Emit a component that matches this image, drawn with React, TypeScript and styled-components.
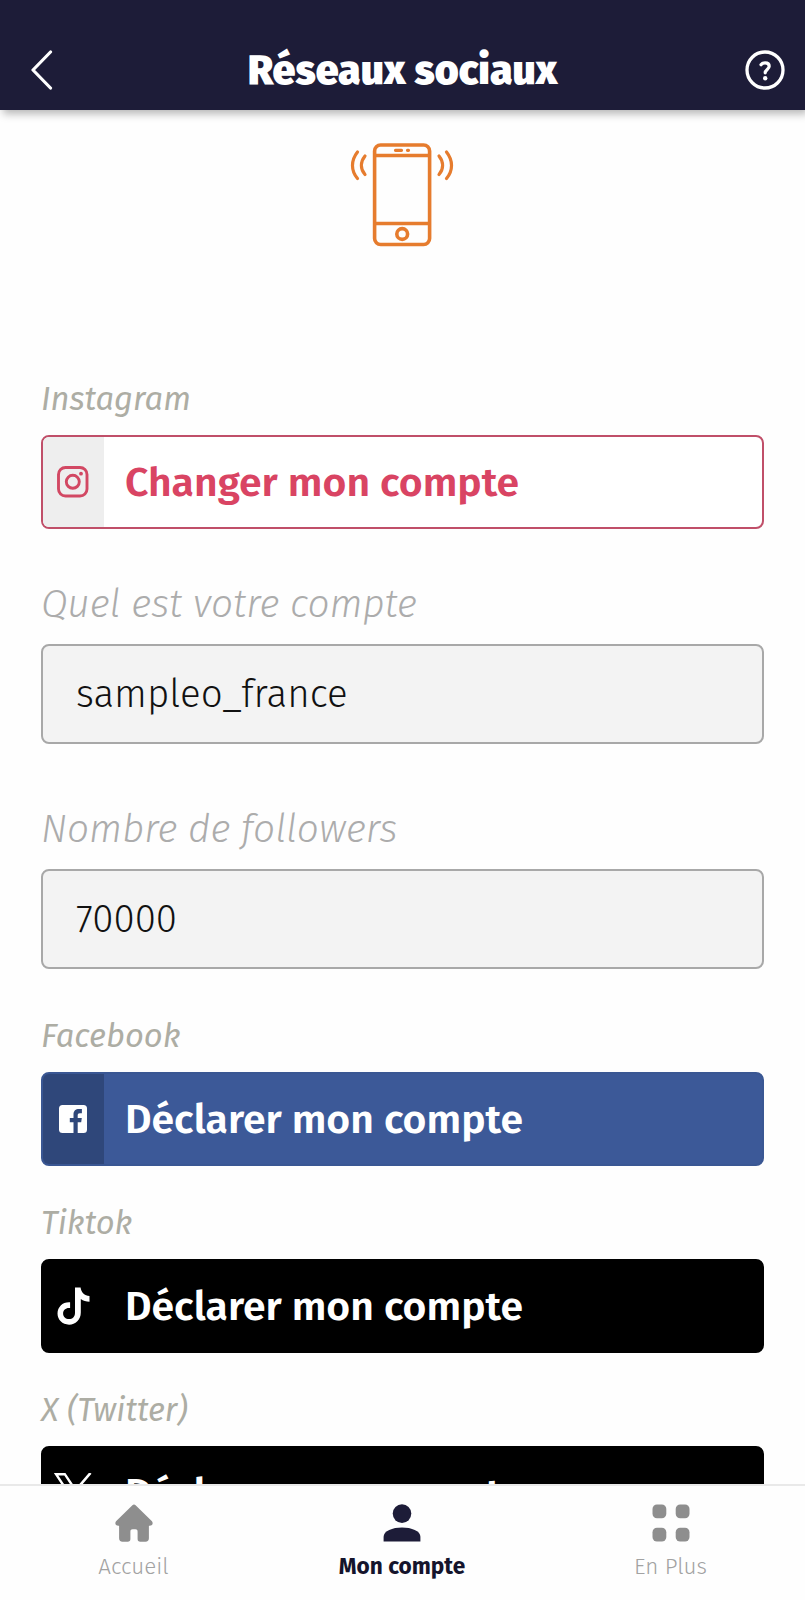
import React from "react";
import styled, { createGlobalStyle } from "styled-components";

const GlobalStyle = createGlobalStyle`
  * { box-sizing: border-box; }
  html, body { margin: 0; background: #fefefe; }
  body { font-family: "Fira Sans", "Noto Sans", sans-serif; }
`;

const Screen = styled.div`
  width: 805px;
  height: 1600px;
  display: flex;
  flex-direction: column;
  overflow: hidden;
  background: #fefefe;
`;

const Header = styled.header`
  flex: none;
  height: 110px;
  padding: 30px 20px 0 30px;
  display: grid;
  grid-template-columns: 50px 1fr 60px;
  align-items: center;
  background: #1d1c38;
  box-shadow: 3px 4px 8px rgba(0, 0, 0, 0.28);
  z-index: 1;
  svg { display: block; }
  svg:last-child { justify-self: end; }
`;

const Title = styled.h1`
  margin: 0;
  padding-top: 2px;
  text-align: center;
  white-space: nowrap;
  font-size: 41px;
  line-height: 50px;
  font-weight: 900;
  color: #fff;
`;

const Main = styled.main`
  flex: 1;
  min-height: 0;
  overflow: hidden;
  padding: 30px 41px 0;
  display: flex;
  flex-direction: column;
`;

const Illustration = styled.div`
  flex: none;
  height: 237px;
  display: flex;
  justify-content: center;
  align-items: flex-start;
`;

const Section = styled.section<{ $after: number }>`
  flex: none;
  margin-bottom: ${(p) => p.$after}px;
`;

const NetworkName = styled.h2`
  margin: 0 0 16px;
  padding-top: 2px;
  font-size: 32.7px;
  line-height: 40px;
  font-weight: 400;
  font-style: italic;
  color: #adada4;
`;

const AccountButton = styled.button<{ $bg: string; $line: string; $ink: string }>`
  width: 100%;
  height: 94px;
  padding: 0;
  display: flex;
  align-items: stretch;
  overflow: hidden;
  border: 2px solid ${(p) => p.$line};
  border-radius: 8px;
  background: ${(p) => p.$bg};
  color: ${(p) => p.$ink};
  font-family: inherit;
`;

const IconCell = styled.span<{ $bg: string }>`
  width: 61px;
  display: flex;
  align-items: center;
  justify-content: center;
  padding-right: 1px;
  background: ${(p) => p.$bg};
`;

const ButtonText = styled.span`
  align-self: center;
  padding: 2px 0 0 21px;
  white-space: nowrap;
  font-size: 40.9px;
  line-height: 54px;
  font-weight: 600;
`;

const FieldLabel = styled.label`
  display: block;
  margin-bottom: 15px;
  padding-top: 2px;
  font-size: 38.8px;
  line-height: 50px;
  font-weight: 300;
  font-style: italic;
  color: #acacac;
`;

const FieldValue = styled.div`
  height: 100px;
  padding: 0 33px;
  border: 2px solid #a8a8a8;
  border-radius: 8px;
  background: #f3f3f3;
  font-size: 38.5px;
  line-height: 96px;
  font-weight: 300;
  color: #111;
`;

const TabBar = styled.nav`
  flex: none;
  height: 116px;
  border-top: 2px solid #e9e9e9;
  background: #fefefe;
  display: grid;
  grid-template-columns: 267px 270px 267px;
`;

const Tab = styled.div<{ $active?: boolean }>`
  display: flex;
  flex-direction: column;
  align-items: center;
  padding-top: 18px;
  color: ${(p) => (p.$active ? "#1d1c38" : "#8e8e8e")};
  svg { display: block; }
`;

const TabText = styled.span<{ $active?: boolean }>`
  margin-top: 10px;
  font-size: ${(p) => (p.$active ? 22.6 : 22.4)}px;
  line-height: 30px;
  font-weight: ${(p) => (p.$active ? 700 : 300)};
  color: ${(p) => (p.$active ? "#15142c" : "#a2a2a2")};
`;

const BackIcon = () => (
  <svg width="24" height="40" viewBox="0 0 24 40" fill="none">
    <path d="M20.500 2 3 20l17.500 18" stroke="#fff" strokeWidth="3.200" strokeLinecap="round" strokeLinejoin="round" />
  </svg>
);

const HelpIcon = () => (
  <svg width="40" height="40" viewBox="0 0 40 40" fill="none" stroke="#fff" strokeLinecap="round">
    <circle cx="20" cy="20" r="18" strokeWidth="3.300" />
    <path d="M16 14.800c1-1.300 2.400-2 4.100-2 2.500 0 4.100 1.400 4.100 3.500 0 3-4 3.300-4 6.500" strokeWidth="3.200" />
    <circle cx="20.200" cy="28.200" r="2.200" fill="#fff" stroke="none" />
  </svg>
);

const PhoneIcon = () => (
  <svg width="105" height="110" viewBox="0 0 105 110" fill="none" stroke="#e67c2e" strokeWidth="3.600" strokeLinecap="round">
    <rect x="24.600" y="5" width="55" height="99.500" rx="6" />
    <path d="M25 15.500h54M25 83.500h54" />
    <path d="M45.500 10.300h6M57.500 10.300h1" strokeWidth="3.200" />
    <circle cx="52.200" cy="94" r="5.400" />
    <path d="M7.500 12C.8 20.500.8 30.500 7.500 38.500M15 16c-4.800 6-4.800 13 0 18.500M96.500 12c6.700 8.500 6.700 18.500 0 26.500M89 16c4.800 6 4.800 13 0 18.500" strokeWidth="3.200" />
  </svg>
);

const InstagramIcon = () => (
  <svg width="32" height="32" viewBox="0 0 32 32" fill="none" stroke="#d24863" strokeWidth="2.900">
    <rect x="1.500" y="1.500" width="28.500" height="28.500" rx="7" />
    <circle cx="15.800" cy="15.800" r="6.500" />
    <circle cx="24" cy="7.700" r="1.900" fill="#d24863" stroke="none" />
  </svg>
);

const FacebookIcon = () => (
  <svg width="30" height="30" viewBox="0 0 30 30">
    <rect x="1" y="1" width="28" height="28" rx="3.500" fill="#fff" />
    <path d="M15.500 29V18.200h-3.700v-4.100h3.700v-3.500c0-3.700 2.200-5.500 5.500-5.500h2.900v4.100h-2c-1.700 0-2.200.8-2.200 2.100v2.800h4.100l-.6 4.100h-3.500V29z" fill="#2f477a" />
  </svg>
);

const TiktokIcon = () => (
  <svg width="33" height="38" viewBox="0 0 33 38">
    <path d="M18 .5h5.600c.5 4.800 3.900 8.200 8.900 8.600v5.600c-3.300 0-6.300-1-8.700-2.700v13.500c0 7.400-5.300 12.200-11.700 12.200C5.300 37.700.5 32.700.5 26.600c0-6.900 5.500-11.900 12.600-11.300v5.800c-3.800-.7-7 1.700-7 5.400 0 3.300 2.600 5.600 5.900 5.600 3.500 0 6-2.500 6-6.400z" fill="#fff" />
  </svg>
);

const XIcon = () => (
  <svg width="38" height="40" viewBox="0 0 38 40" fill="none" stroke="#fff">
    <path d="M2 1.200h8.800L36 38.800h-8.800z" strokeWidth="2.400" />
    <path d="M36.500 0 21.500 17.500M16.500 22.500 2 40" strokeWidth="2.600" />
  </svg>
);

const HomeIcon = () => (
  <svg width="38" height="38" viewBox="0 0 38 38" fill="currentColor">
    <path d="M17.400 1.200c1-.9 2.200-.9 3.200 0L36.700 17c1.900 1.900.8 4.700-1.900 4.700h-.9v12.600c0 2.200-1.200 3.400-3.400 3.400h-5.200c-1.800 0-2.700-.9-2.700-2.700v-7.300c0-1.600-.8-2.400-2.200-2.400h-2.800c-1.400 0-2.200.8-2.200 2.400V35c0 1.800-.9 2.700-2.700 2.700H7.500c-2.200 0-3.400-1.200-3.400-3.400V21.700h-.9c-2.700 0-3.800-2.800-1.900-4.700z" />
  </svg>
);

const PersonIcon = () => (
  <svg width="38" height="38" viewBox="0 0 38 38" fill="currentColor">
    <circle cx="19" cy="9.600" r="9.300" />
    <path d="M.6 37.500v-4.800c0-5.800 8.900-9.200 18.400-9.200s18.400 3.400 18.400 9.200v4.800z" />
  </svg>
);

const GridIcon = () => (
  <svg width="38" height="38" viewBox="0 0 38 38" fill="currentColor">
    <rect x=".5" y=".5" width="13.800" height="13.800" rx="4.500" />
    <rect x="23.700" y=".5" width="13.800" height="13.800" rx="4.500" />
    <rect x=".5" y="23.700" width="13.800" height="13.800" rx="4.500" />
    <rect x="23.700" y="23.700" width="13.800" height="13.800" rx="4.500" />
  </svg>
);

export default function App() {
  return (
    <Screen>
      <GlobalStyle />
      <Header>
        <BackIcon />
        <Title>Réseaux sociaux</Title>
        <HelpIcon />
      </Header>
      <Main>
        <Illustration><PhoneIcon /></Illustration>
        <Section $after={48}>
          <NetworkName>Instagram</NetworkName>
          <AccountButton $bg="#fff" $line="#c04f69" $ink="#d94463">
            <IconCell $bg="#eeeeee"><InstagramIcon /></IconCell>
            <ButtonText>Changer mon compte</ButtonText>
          </AccountButton>
        </Section>
        <Section $after={58}>
          <FieldLabel>Quel est votre compte</FieldLabel>
          <FieldValue>sampleo_france</FieldValue>
        </Section>
        <Section $after={45}>
          <FieldLabel>Nombre de followers</FieldLabel>
          <FieldValue>70000</FieldValue>
        </Section>
        <Section $after={35}>
          <NetworkName>Facebook</NetworkName>
          <AccountButton $bg="#3c5998" $line="#3a5793" $ink="#fff">
            <IconCell $bg="#2f477a"><FacebookIcon /></IconCell>
            <ButtonText>Déclarer mon compte</ButtonText>
          </AccountButton>
        </Section>
        <Section $after={35}>
          <NetworkName>Tiktok</NetworkName>
          <AccountButton $bg="#000" $line="#000" $ink="#fff">
            <IconCell $bg="#000"><TiktokIcon /></IconCell>
            <ButtonText>Déclarer mon compte</ButtonText>
          </AccountButton>
        </Section>
        <Section $after={0}>
          <NetworkName>X (Twitter)</NetworkName>
          <AccountButton $bg="#000" $line="#000" $ink="#fff">
            <IconCell $bg="#000"><XIcon /></IconCell>
            <ButtonText>Déclarer mon compte</ButtonText>
          </AccountButton>
        </Section>
      </Main>
      <TabBar>
        <Tab><HomeIcon /><TabText>Accueil</TabText></Tab>
        <Tab $active><PersonIcon /><TabText $active>Mon compte</TabText></Tab>
        <Tab><GridIcon /><TabText>En Plus</TabText></Tab>
      </TabBar>
    </Screen>
  );
}
